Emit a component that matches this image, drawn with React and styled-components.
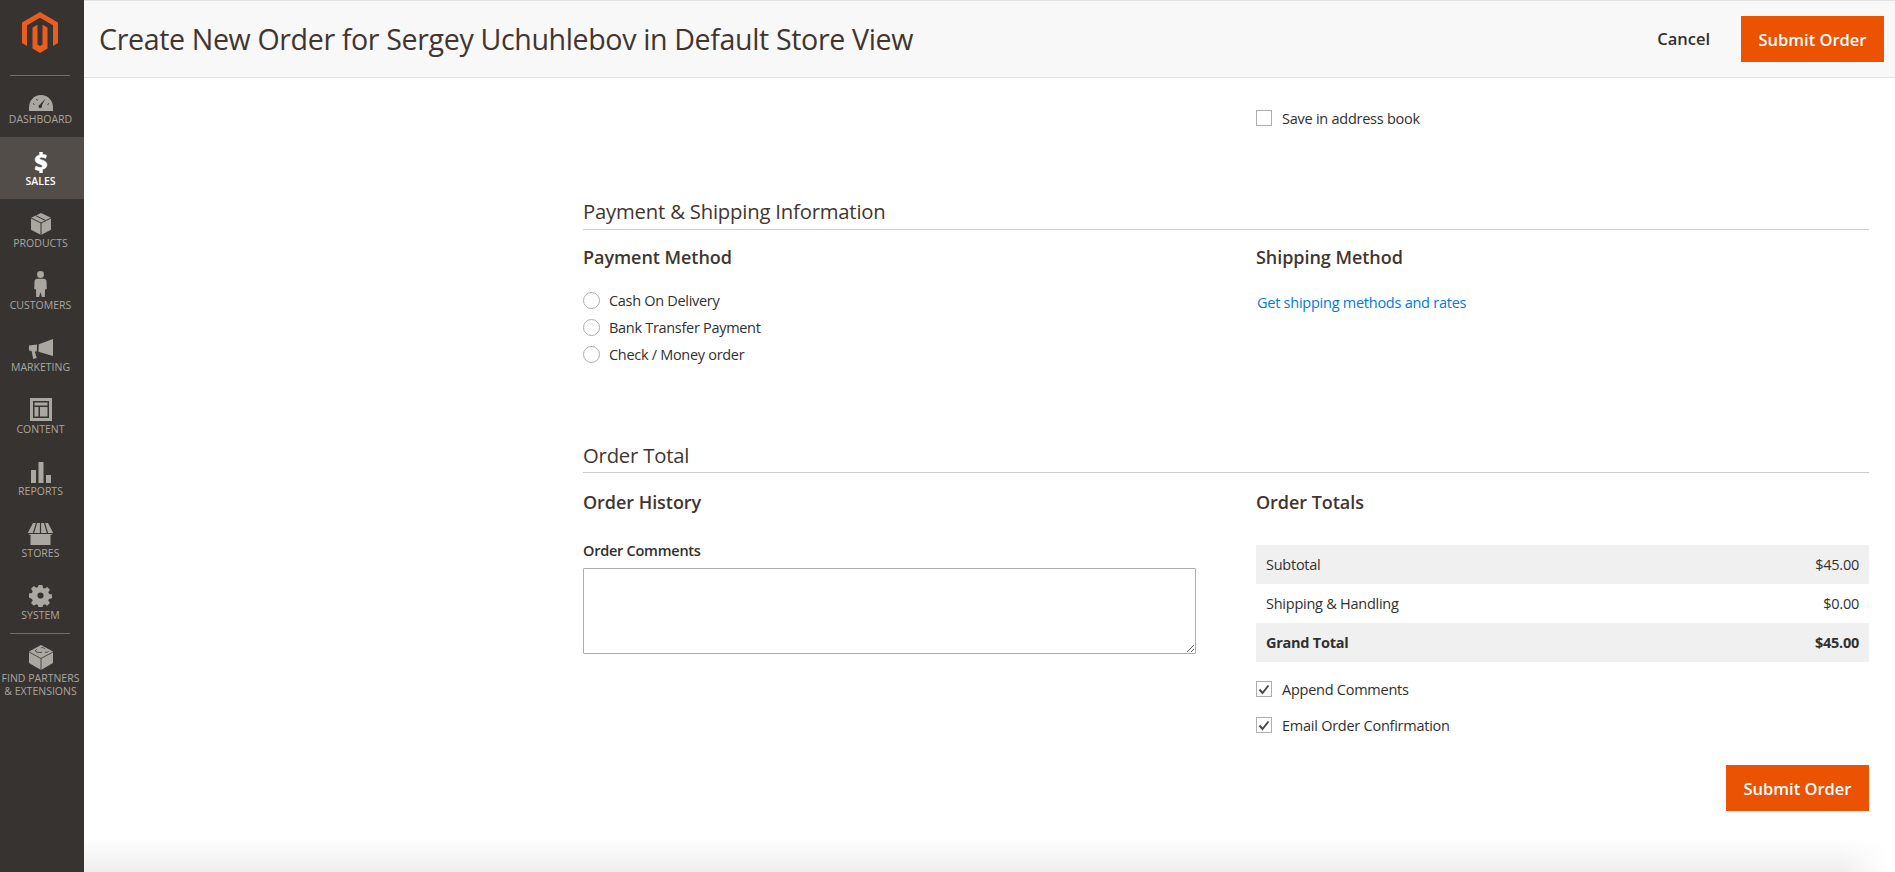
import React from 'react';
import styled, { createGlobalStyle } from 'styled-components';

const GlobalStyle = createGlobalStyle`
  html, body {
    margin: 0;
    padding: 0;
    background: #fff;
  }
  * {
    box-sizing: border-box;
  }
  body {
    font-family: "Open Sans", "Liberation Sans", sans-serif;
    color: #303030;
  }
`;

const Shell = styled.div`
  display: flex;
  height: 872px;
  overflow: hidden;
`;

// --- Sidebar ---
const Sidebar = styled.nav`
  width: 84px;
  flex: none;
  background: #373330;
`;

const LogoBox = styled.div`
  height: 76px;
  margin: 0 14px 0 10px;
  padding-top: 12px;
  display: flex;
  justify-content: center;
  border-bottom: 1px solid #736e69;
`;

const NavList = styled.div`
  margin-top: -1px;
`;

const NavItem = styled.a`
  display: flex;
  flex-direction: column;
  align-items: center;
  height: ${props => props.$tall ? '78px' : '62px'};
  padding-right: 3px;
  background: ${props => props.$active ? '#524d49' : 'transparent'};
  color: ${props => props.$active ? '#fff' : '#aaa6a0'};
  font-size: 10.5px;
  line-height: 13px;
  font-weight: ${props => props.$active ? 600 : 400};
  text-align: center;
  text-transform: uppercase;
  white-space: nowrap;
`;

const IconSlot = styled.span`
  height: 37px;
  display: flex;
  align-items: flex-end;
  justify-content: center;
  padding-bottom: 1px;
  margin-bottom: 1px;
  flex: none;
  color: ${props => props.$active ? '#fff' : '#aaa6a0'};
`;

const NavDivider = styled.div`
  height: 1px;
  margin: 0 14px 0 10px;
  background: #736e69;
`;

// --- Header ---
const Main = styled.main`
  flex: 1;
  min-width: 0;
  display: flex;
  flex-direction: column;
`;

const PageHeader = styled.header`
  height: 78px;
  flex: none;
  display: flex;
  align-items: center;
  justify-content: space-between;
  padding: 0 11px 0 15px;
  background: #f8f8f8;
  border-top: 1px solid #e3e3e3;
  border-bottom: 1px solid #e3e3e3;
`;

const PageTitle = styled.h1`
  margin: 0 0 2px;
  font-size: 28.6px;
  letter-spacing: -0.37px;
  font-weight: 400;
  color: #41362f;
`;

const HeaderActions = styled.div`
  display: flex;
  align-items: center;
  gap: 31px;
`;

const CancelLink = styled.a`
  padding-bottom: 1px;
  font-size: 16.5px;
  font-weight: 600;
  color: #303030;
`;

const SubmitButton = styled.button`
  width: 143px;
  height: 46px;
  border: 0;
  padding: 0;
  background: #eb5202;
  color: #fff;
  font-family: inherit;
  font-size: 16.5px;
  font-weight: 600;
`;

// --- Form content ---
const Content = styled.div`
  padding: 32px 26px 0 499px;
`;

const Columns = styled.div`
  display: grid;
  grid-template-columns: 613px 613px;
  column-gap: 60px;
`;

const SectionTitle = styled.h2`
  margin: ${props => props.$gap}px 0 0;
  padding-bottom: ${props => props.$pad}px;
  font-size: 20.3px;
  line-height: 28px;
  letter-spacing: -0.2px;
  font-weight: 400;
  color: #41362f;
  border-bottom: 1px solid #cccccc;
`;

const ColumnTitle = styled.h3`
  margin: ${props => props.$gap}px 0 0;
  font-size: 18px;
  line-height: 24px;
  letter-spacing: -0.05px;
  font-weight: 600;
  color: #41362f;
`;

const CheckRow = styled.label`
  display: flex;
  align-items: center;
  gap: 10px;
  height: 16px;
  margin-top: ${props => props.$gap || 0}px;
  font-size: 14.5px;
  letter-spacing: -0.25px;
`;

const CheckBox = styled.span`
  width: 16px;
  height: 16px;
  flex: none;
  display: flex;
  align-items: center;
  justify-content: center;
  border: 1px solid #adadad;
  background: #fff;
`;

const RadioList = styled.div`
  margin-top: 18px;
`;

const RadioRow = styled.label`
  display: flex;
  align-items: center;
  gap: 9px;
  height: 27px;
  font-size: 14.5px;
  letter-spacing: -0.3px;
`;

const RadioDot = styled.span`
  width: 17px;
  height: 17px;
  flex: none;
  border: 1px solid #adadad;
  border-radius: 50%;
  background: #fff;
`;

const ShippingLink = styled.a`
  display: block;
  margin: 24px 0 0 1px;
  font-size: 14.5px;
  line-height: 20px;
  letter-spacing: -0.25px;
  color: #007bdb;
`;

const FieldLabel = styled.label`
  display: block;
  margin-top: 27px;
  font-size: 14.5px;
  line-height: 20px;
  letter-spacing: -0.25px;
  font-weight: 600;
`;

const CommentBox = styled.textarea`
  display: block;
  width: 613px;
  height: 86px;
  margin-top: 7px;
  padding: 8px;
  border: 1px solid #adadad;
  border-radius: 1px;
  background: #fff;
  outline: 0;
  font-family: inherit;
`;

const TotalsTable = styled.div`
  margin-top: 31px;
`;

const TotalsRow = styled.div`
  display: flex;
  align-items: center;
  justify-content: space-between;
  height: 39px;
  padding: 0 10px;
  font-size: 14.5px;
  letter-spacing: -0.25px;
  font-weight: ${props => props.$strong ? 700 : 400};
  background: ${props => props.$shaded ? '#f0f0f0' : '#fff'};
`;

const Options = styled.div`
  margin-top: 19px;
`;

const FormFooter = styled.div`
  display: flex;
  justify-content: flex-end;
  margin-top: 32px;
`;

// the soft fade at the bottom edge of the page
const BottomFade = styled.div`
  margin-top: auto;
  height: 34px;
  flex: none;
  background: linear-gradient(to bottom, rgba(238, 238, 238, 0), #eeeeee);
  -webkit-mask-image: linear-gradient(to right, #000 97%, transparent 99.7%);
  mask-image: linear-gradient(to right, #000 97%, transparent 99.7%);
`;

// --- Icons (drawn to follow the admin icon font) ---
const Logo = () => (
  <svg width="36" height="41" viewBox="0 0 36 41">
    <path fill="#eb5c1f" d="M18 0 36 10.400V31l-5 2.900V13.300L18 5.800 5 13.300v20.600L0 31V10.400z" />
    <path fill="#eb5c1f" d="M10.500 15.500 15.500 12.700V32.600L18 34.100 20.500 32.600V12.700L25.500 15.500V36.400L18 41 10.500 36.400z" />
  </svg>
);

const GaugeIcon = () => (
  <svg width="24" height="16" viewBox="0 0 24 16">
    <path fill="currentColor" d="M12 0C5 0 0 5.500 0 12.500V16h24v-3.500C24 5.500 19 0 12 0z" />
    <path fill="#373330" d="M16.200 3.800 12.900 10.500a1.800 1.800 0 1 1-1.900-1z" />
    <path stroke="#373330" strokeWidth="1" d="M4 8.500l1.500 1M7.500 4l1 1.500M20 8.500l-1.500 1" />
  </svg>
);

const DollarIcon = () => (
  <svg width="14" height="21" viewBox="0 0 14 23">
    <path fill="currentColor" stroke="currentColor" strokeWidth=".7" d="M5.500 0h3v2.500c1.800.2 3.300.6 4.500 1.200l-.9 3.200c-1.300-.6-2.900-1.100-4.500-1.100-1.500 0-2.100.5-2.100 1.200 0 .8.900 1.200 3 1.900 3.200 1.100 5 2.500 5 5.100 0 2.500-1.800 4.500-5 5V23h-3v-2.700c-2-.1-3.900-.7-5-1.400l.9-3.300c1.300.7 3 1.300 4.800 1.300 1.500 0 2.500-.6 2.500-1.500 0-.9-.8-1.400-2.800-2.100C2.600 12.300.6 10.900.6 8.200c0-2.400 1.800-4.400 4.900-5z" />
  </svg>
);

const BoxIcon = () => (
  <svg width="20" height="22" viewBox="0 0 20 22">
    <path fill="currentColor" d="M10 0 20 4.800V16.700L10 22 0 16.700V4.800z" />
    <path stroke="#373330" strokeWidth="1" d="M5 2.700l9.800 5M10 10v12M0 5l10 5 10-5" fill="none" />
  </svg>
);

const PersonIcon = () => (
  <svg width="13" height="26" viewBox="0 0 13 27">
    <circle cx="6.500" cy="3.600" r="3.600" fill="currentColor" />
    <path fill="currentColor" d="M3 8h7c1.600 0 2.500 1 2.700 2.400L13 19h-1.800L11 27H8l-1.500-5L5 27H2l-.2-8H0l.3-8.600C.5 9 1.400 8 3 8z" />
  </svg>
);

const MegaphoneIcon = () => (
  <svg width="24" height="20" viewBox="0 0 24 20">
    <path fill="currentColor" d="M24 0v17L9.500 12.800 9.700 5.300zM0 6.500l8-1.100-.2 7.200L5.800 12.400 7.700 19 4.200 20 2.600 12.100 0 11.500z" />
  </svg>
);

const LayoutIcon = () => (
  <svg width="22" height="23" viewBox="0 0 22 23">
    <path fill="currentColor" fillRule="evenodd" d="M0 0h22v23H0zM3 3v17h16V3zM4.500 4.500h13v3h-13zM4.500 9h4v9.500h-4zM10 9h7.500v9.500H10z" />
  </svg>
);

const BarsIcon = () => (
  <svg width="20" height="21" viewBox="0 0 20 21">
    <path fill="currentColor" d="M0 8h5v13H0zM7.500 0h5v21h-5zM15 13h5v8h-5z" />
  </svg>
);

const StoreIcon = () => (
  <svg width="25" height="22" viewBox="0 0 25 22">
    <path fill="currentColor" d="M5 0h15l5 9.500c0 1.500-1.200 2.300-2.500 2.300V22H2.500V11.800C1.200 11.800 0 11 0 9.500z" />
    <path stroke="#373330" strokeWidth="1.200" d="M8.500 0 5.500 10M12.500 0v10M16.500 0l3 10M0 10.500h25" fill="none" />
  </svg>
);

const GearIcon = () => (
  <svg width="23" height="23" viewBox="-1 0 26 24">
    <path fill="currentColor" fillRule="evenodd" d="M9.800 0h4.400l.7 3.400 1.800.8 2.900-1.900 3.100 3.100-1.900 2.900.8 1.800 3.400.7v4.400l-3.400.7-.8 1.800 1.900 2.900-3.100 3.100-2.900-1.900-1.800.8-.7 3.400H9.800l-.7-3.400-1.800-.8-2.900 1.900-3.100-3.100 1.900-2.900-.8-1.800L-1 14.200V9.800l3.400-.7.800-1.800L1.300 4.400 4.400 1.300l2.900 1.900 1.800-.8zM12 8.500a3.500 3.500 0 1 0 0 7 3.500 3.500 0 0 0 0-7z" />
  </svg>
);

const BrickIcon = () => (
  <svg width="24" height="25" viewBox="0 0 24 25">
    <path fill="currentColor" d="M12 0 24 6.500V18L12 25 0 18V6.500z" />
    <path stroke="#373330" strokeWidth=".8" fill="none" d="M12 13.500V25M0 7l12 6.500L24 7M8 4.500c-2 .6-2 2 0 2.600s4 .6 5 0M12 2.800c2-.6 4 .6 4 1.400M16 7c1.600.6 3 .2 3.500-.5" />
  </svg>
);

const CheckMark = () => (
  <svg width="12" height="11" viewBox="0 0 12 11">
    <path fill="none" stroke="#4a4a4a" strokeWidth="2" d="M1.500 5.500 4.500 9 10.500 1.500" />
  </svg>
);

const navItems = [
  { label: 'Dashboard', icon: <GaugeIcon /> },
  { label: 'Sales', icon: <DollarIcon />, active: true },
  { label: 'Products', icon: <BoxIcon /> },
  { label: 'Customers', icon: <PersonIcon /> },
  { label: 'Marketing', icon: <MegaphoneIcon /> },
  { label: 'Content', icon: <LayoutIcon /> },
  { label: 'Reports', icon: <BarsIcon /> },
  { label: 'Stores', icon: <StoreIcon /> },
  { label: 'System', icon: <GearIcon /> },
];

const payments = ['Cash On Delivery', 'Bank Transfer Payment', 'Check / Money order'];

const App = () => (
  <>
    <GlobalStyle />
    <Shell>
      <Sidebar>
        <LogoBox><Logo /></LogoBox>
        <NavList>
          {navItems.map(item => (
            <NavItem key={item.label} $active={item.active}>
              <IconSlot $active={item.active}>{item.icon}</IconSlot>
              {item.label}
            </NavItem>
          ))}
          <NavDivider />
          <NavItem $tall>
            <IconSlot><BrickIcon /></IconSlot>
            Find Partners<br />&amp; Extensions
          </NavItem>
        </NavList>
      </Sidebar>

      <Main>
        <PageHeader>
          <PageTitle>Create New Order for Sergey Uchuhlebov in Default Store View</PageTitle>
          <HeaderActions>
            <CancelLink>Cancel</CancelLink>
            <SubmitButton>Submit Order</SubmitButton>
          </HeaderActions>
        </PageHeader>

        <Content>
          <Columns>
            <div />
            <CheckRow><CheckBox />Save in address book</CheckRow>
          </Columns>

          <SectionTitle $gap={71} $pad={4}>Payment &amp; Shipping Information</SectionTitle>
          <Columns>
            <div>
              <ColumnTitle $gap={15}>Payment Method</ColumnTitle>
              <RadioList>
                {payments.map(name => (
                  <RadioRow key={name}><RadioDot />{name}</RadioRow>
                ))}
              </RadioList>
            </div>
            <div>
              <ColumnTitle $gap={15}>Shipping Method</ColumnTitle>
              <ShippingLink>Get shipping methods and rates</ShippingLink>
            </div>
          </Columns>

          <SectionTitle $gap={73} $pad={3}>Order Total</SectionTitle>
          <Columns>
            <div>
              <ColumnTitle $gap={17}>Order History</ColumnTitle>
              <FieldLabel>Order Comments</FieldLabel>
              <CommentBox />
            </div>
            <div>
              <ColumnTitle $gap={17}>Order Totals</ColumnTitle>
              <TotalsTable>
                <TotalsRow $shaded><span>Subtotal</span><span>$45.00</span></TotalsRow>
                <TotalsRow><span>Shipping &amp; Handling</span><span>$0.00</span></TotalsRow>
                <TotalsRow $shaded $strong><span>Grand Total</span><span>$45.00</span></TotalsRow>
              </TotalsTable>
              <Options>
                <CheckRow><CheckBox><CheckMark /></CheckBox>Append Comments</CheckRow>
                <CheckRow $gap={20}><CheckBox><CheckMark /></CheckBox>Email Order Confirmation</CheckRow>
              </Options>
              <FormFooter><SubmitButton>Submit Order</SubmitButton></FormFooter>
            </div>
          </Columns>
        </Content>

        <BottomFade />
      </Main>
    </Shell>
  </>
);

export default App;
